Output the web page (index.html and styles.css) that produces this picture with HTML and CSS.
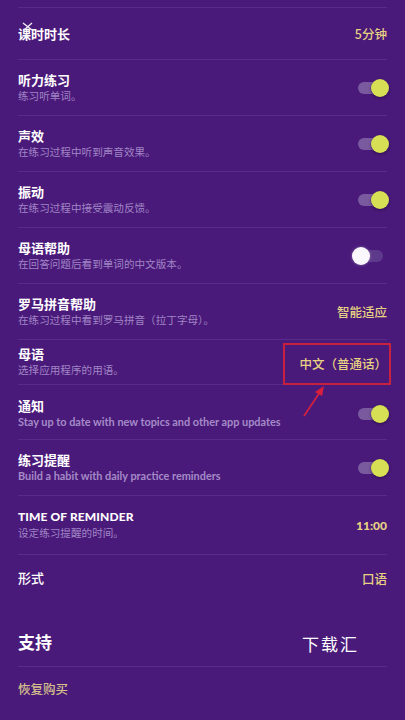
FILE: index.html
```html
<!DOCTYPE html>
<html lang="zh-CN">
<head>
    <meta charset="UTF-8">
    <meta name="viewport" content="width=device-width, initial-scale=1.0">
    <title>设置</title>
    <link rel="stylesheet" href="styles.css">
</head>
<body>
<div class="screen">
    <div class="list">
        <div class="row row-first">
            <div class="label"><div class="title">课时时长</div></div>
            <div class="value">5分钟</div>
            <svg class="stray-mark" width="12" height="9" viewBox="0 0 12 9">
                <path d="M1 1 L10 8 M10 1 L2 8" stroke="#f4eefa" stroke-width="1.3" fill="none"/>
            </svg>
        </div>
        <div class="row">
            <div class="label">
                <div class="title">听力练习</div>
                <div class="sub">练习听单词。</div>
            </div>
            <div class="toggle on"></div>
        </div>
        <div class="row">
            <div class="label">
                <div class="title">声效</div>
                <div class="sub">在练习过程中听到声音效果。</div>
            </div>
            <div class="toggle on"></div>
        </div>
        <div class="row">
            <div class="label">
                <div class="title">振动</div>
                <div class="sub">在练习过程中接受震动反馈。</div>
            </div>
            <div class="toggle on"></div>
        </div>
        <div class="row">
            <div class="label">
                <div class="title">母语帮助</div>
                <div class="sub">在回答问题后看到单词的中文版本。</div>
            </div>
            <div class="toggle"></div>
        </div>
        <div class="row">
            <div class="label">
                <div class="title">罗马拼音帮助</div>
                <div class="sub">在练习过程中看到罗马拼音（拉丁字母）。</div>
            </div>
            <div class="value">智能适应</div>
        </div>
        <div class="row row-short">
            <div class="label">
                <div class="title">母语</div>
                <div class="sub">选择应用程序的用语。</div>
            </div>
            <div class="value boxed">中文（普通话）</div>
        </div>
        <div class="row row-notify">
            <div class="label">
                <div class="title">通知</div>
                <div class="sub sub-en">Stay up to date with new topics and other app updates</div>
            </div>
            <div class="toggle on"></div>
        </div>
        <div class="row">
            <div class="label">
                <div class="title">练习提醒</div>
                <div class="sub sub-en">Build a habit with daily practice reminders</div>
            </div>
            <div class="toggle on"></div>
        </div>
        <div class="row row-tall">
            <div class="label">
                <div class="title title-en">TIME OF REMINDER</div>
                <div class="sub">设定练习提醒的时间。</div>
            </div>
            <div class="value value-en">11:00</div>
        </div>
        <div class="row row-last">
            <div class="label"><div class="title title-plain">形式</div></div>
            <div class="value">口语</div>
        </div>
    </div>

    <div class="support">
        <h2 class="support-title">支持</h2>
        <span class="watermark">下载汇</span>
    </div>
    <div class="restore">恢复购买</div>

    <!-- annotation arrow pointing at the boxed value -->
    <svg class="arrow" width="30" height="34" viewBox="0 0 30 34">
        <path d="M3 32 L19 8" stroke="#d8203c" stroke-width="1.6" fill="none"/>
        <path d="M23 2 L14 8 L21 12 Z" fill="#d8203c"/>
    </svg>
</div>
</body>
</html>
```

FILE: styles.css
```css
body {
    margin: 0;
    background-color: #4a1a7a;
    font-family: "Noto Sans CJK SC", "Noto Sans", sans-serif;
    color: #ffffff;
}

.screen {
    position: relative;
    width: 405px;
    height: 720px;
    overflow: hidden;
    background-color: #4a1a7a;
}

.list {
    padding: 7px 18px 0 18px;
}

.row {
    position: relative;
    display: flex;
    align-items: center;
    justify-content: space-between;
    box-sizing: border-box;
    height: 56px;
    border-bottom: 1px solid #5a2c8a;
}

.row-first {
    height: 53px;
    border-top: 1px solid #5a2c8a;
}

.row-short {
    height: 45px;
}

.row-notify {
    height: 55px;
    padding-top: 3px;
}

.row-tall {
    height: 59px;
}

.row-last {
    height: 46px;
    border-bottom: none;
}

.title {
    font-size: 13px;
    font-weight: 700;
    line-height: 16px;
}

.title-en {
    font-family: Lato, "Noto Sans", sans-serif;
    font-weight: 900;
    font-size: 12px;
    letter-spacing: 0.1px;
}

.title-plain {
    font-weight: 500;
}

.sub {
    font-size: 10.6px;
    line-height: 16px;
    color: #a185c6;
}

.sub-en {
    font-family: Lato, "Noto Sans", sans-serif;
    font-weight: 700;
    font-size: 10.9px;
    color: #a58ac8;
}

.value {
    font-size: 12.5px;
    font-weight: 500;
    color: #e6d282;
}

.value-en {
    font-family: Lato, "Noto Sans", sans-serif;
    font-weight: 900;
    font-size: 12px;
}

.boxed {
    border: 2px solid #c8213f;
    padding: 9px 2px 10px 14px;
    margin-right: -4px;
    margin-top: 3px;
}

.toggle {
    position: relative;
    width: 37px;
    height: 18px;
    margin-right: -2px;
}

.toggle::before {
    content: "";
    position: absolute;
    left: 6px;
    top: 3px;
    width: 25px;
    height: 12px;
    border-radius: 6px;
    background-color: #5e3a8c;
}

.toggle::after {
    content: "";
    position: absolute;
    left: 0;
    top: 0;
    width: 18px;
    height: 18px;
    border-radius: 50%;
    background-color: #fbf8fd;
    box-shadow: 0 0 3px rgba(255, 255, 255, 0.35);
}

.toggle.on::before {
    background-color: #7a5a9e;
}

.toggle.on::after {
    left: auto;
    right: 0;
    background-color: #d7df55;
    box-shadow: 0 1px 3px rgba(20, 0, 40, 0.55);
}

.stray-mark {
    position: absolute;
    left: 4px;
    top: 14px;
}

.support {
    display: flex;
    align-items: flex-end;
    justify-content: space-between;
    box-sizing: border-box;
    height: 66px;
    margin: 0 18px;
    padding-bottom: 12px;
    border-bottom: 1px solid #5a2c8a;
}

.support-title {
    margin: 0;
    font-size: 17px;
    font-weight: 700;
    line-height: 24px;
}

.watermark {
    margin-right: 28px;
    margin-bottom: -2px;
    font-size: 17px;
    font-weight: 400;
    letter-spacing: 2px;
    line-height: 24px;
}

.restore {
    padding: 12px 18px 0 18px;
    font-size: 12.5px;
    line-height: 20px;
    font-weight: 500;
    color: #d6c28c;
}

.arrow {
    position: absolute;
    left: 301px;
    top: 384px;
}
```
